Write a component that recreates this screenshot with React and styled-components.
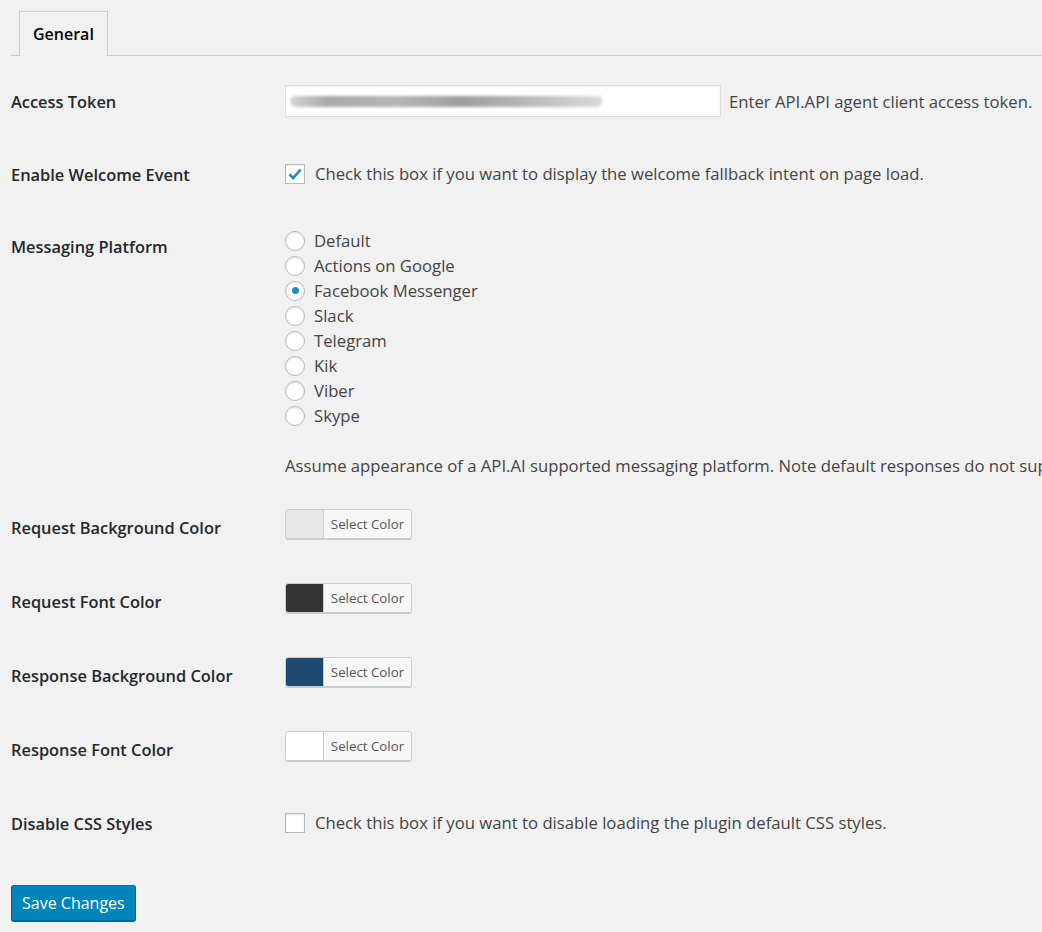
import styled, { createGlobalStyle } from "styled-components";

const GlobalStyle = createGlobalStyle`
  html, body { margin: 0; background: #f1f1f1; }
  body { font-family: "Open Sans", "Noto Sans", sans-serif; color: #444; overflow: hidden; }
`;

const platforms = ["Default", "Actions on Google", "Facebook Messenger", "Slack", "Telegram", "Kik", "Viber", "Skype"];

const colorRows = [
  { label: "Request Background Color", color: "#e8e8e8" },
  { label: "Request Font Color", color: "#333333" },
  { label: "Response Background Color", color: "#1e4a72" },
  { label: "Response Font Color", color: "#ffffff" },
];

function CheckMark() {
  return (
    <svg width="16" height="16" viewBox="0 0 16 16">
      <path d="M2.5 8.3 L6.2 12 L13.6 3.6" fill="none" stroke="#1e8cbe" strokeWidth="2.6" strokeLinejoin="miter" />
    </svg>
  );
}

export default function App() {
  return (
    <Page>
      <GlobalStyle />
      <TabBar>
        <Tab>General</Tab>
      </TabBar>

      <Row>
        <Label $top={24} $bottom={25}>Access Token</Label>
        <Field>
          <TextInput><Smear /></TextInput>
          <Hint>Enter API.API agent client access token.</Hint>
        </Field>
      </Row>

      <Row>
        <Label>Enable Welcome Event</Label>
        <Field>
          <CheckLine>
            <Box><CheckMark /></Box>
            Check this box if you want to display the welcome fallback intent on page load.
          </CheckLine>
        </Field>
      </Row>

      <Row>
        <Label>Messaging Platform</Label>
        <Field $top={18}>
          <RadioList>
            {platforms.map((p) => (
              <RadioLine key={p}>
                <Radio $on={p === "Facebook Messenger"} />
                {p}
              </RadioLine>
            ))}
          </RadioList>
          <Description>
            Assume appearance of a API.AI supported messaging platform. Note default responses do not support rich messages.
          </Description>
        </Field>
      </Row>

      {colorRows.map((r) => (
        <Row key={r.label}>
          <Label $bottom={26}>{r.label}</Label>
          <Field>
            <ColorButton>
              <Swatch $color={r.color} />
              <ColorText>Select Color</ColorText>
            </ColorButton>
          </Field>
        </Row>
      ))}

      <Row>
        <Label>Disable CSS Styles</Label>
        <Field>
          <CheckLine>
            <Box />
            Check this box if you want to disable loading the plugin default CSS styles.
          </CheckLine>
        </Field>
      </Row>

      <SaveButton>Save Changes</SaveButton>
    </Page>
  );
}

const Page = styled.div`
  padding: 11px 0 40px 11px;
  width: 1031px;
  overflow: hidden;
  font-size: 16.7px;
`;

const TabBar = styled.div`
  display: flex;
  border-bottom: 1px solid #ccc;
  padding-left: 8px;
  margin-bottom: 10px;
`;

const Tab = styled.div`
  border: 1px solid #ccc;
  border-bottom: none;
  background: #f1f1f1;
  margin-bottom: -1px;
  padding: 0 13px;
  height: 44px;
  display: flex;
  align-items: center;
  font-weight: 600;
  font-size: 16px;
  color: #000;
`;

const Row = styled.div`
  display: flex;
  align-items: flex-start;
`;

const Label = styled.div`
  width: 274px;
  flex-shrink: 0;
  padding: ${(p) => p.$top ?? 25}px 0 ${(p) => p.$bottom ?? 24}px;
  line-height: 23px;
  font-size: 16.4px;
  font-weight: 600;
  color: #23282d;
`;

const Field = styled.div`
  padding: ${(p) => p.$top ?? 19}px 0 19px;
  white-space: nowrap;
`;

const TextInput = styled.div`
  display: inline-flex;
  align-items: center;
  vertical-align: middle;
  width: 430px;
  height: 30px;
  background: #fff;
  border: 1px solid #ddd;
  box-shadow: inset 0 1px 2px rgba(0, 0, 0, 0.07);
  padding-left: 4px;
  box-sizing: content-box;
`;

const Smear = styled.span`
  display: block;
  width: 312px;
  height: 11px;
  border-radius: 6px 3px 6px 8px;
  background: linear-gradient(90deg, #d6d6d6, #a9a9a9 12%, #b5b5b5 35%, #9d9d9d 55%, #bdbdbd 80%, #dadada);
  filter: blur(1.6px);
`;

const Hint = styled.span`
  margin-left: 8px;
  vertical-align: middle;
  color: #444;
`;

const CheckLine = styled.label`
  display: flex;
  align-items: center;
  gap: 10px;
  height: 33px;
  color: #444;
`;

const Box = styled.span`
  width: 18px;
  height: 18px;
  border: 1px solid #b4b9be;
  background: #fff;
  box-shadow: inset 0 1px 2px rgba(0, 0, 0, 0.1);
  display: flex;
  align-items: center;
  justify-content: center;
`;

const RadioList = styled.div`
  display: flex;
  flex-direction: column;
`;

const RadioLine = styled.label`
  display: flex;
  align-items: center;
  gap: 9px;
  height: 25px;
  color: #444;
`;

const Radio = styled.span`
  width: 18px;
  height: 18px;
  border-radius: 50%;
  border: 1px solid #b4b9be;
  background: #fff;
  box-shadow: inset 0 1px 2px rgba(0, 0, 0, 0.1);
  display: flex;
  align-items: center;
  justify-content: center;
  &::after {
    content: "";
    display: ${(p) => (p.$on ? "block" : "none")};
    width: 7px;
    height: 7px;
    border-radius: 50%;
    background: #1e8cbe;
  }
`;

const Description = styled.p`
  margin: 26px 0 -5px;
  line-height: 23px;
  color: #444;
`;

const ColorButton = styled.div`
  display: inline-flex;
  height: 28px;
  width: 125px;
  border: 1px solid #ccc;
  border-radius: 3px;
  box-shadow: 0 1px 0 #ccc;
  overflow: hidden;
  margin-top: -1px;
`;

const Swatch = styled.span`
  width: 37px;
  background: ${(p) => p.$color};
  border-right: 1px solid #ccc;
`;

const ColorText = styled.span`
  flex: 1;
  background: #f7f7f7;
  display: flex;
  align-items: center;
  justify-content: center;
  font-size: 13.3px;
  color: #555;
`;

const SaveButton = styled.button`
  margin-top: 26px;
  height: 36px;
  padding: 0 10px;
  background: #0085ba;
  border: 1px solid #0073aa;
  border-color: #0073aa #006799 #006799;
  border-radius: 3px;
  box-shadow: 0 1px 0 #006799;
  color: #fff;
  font-family: inherit;
  font-size: 16px;
`;
